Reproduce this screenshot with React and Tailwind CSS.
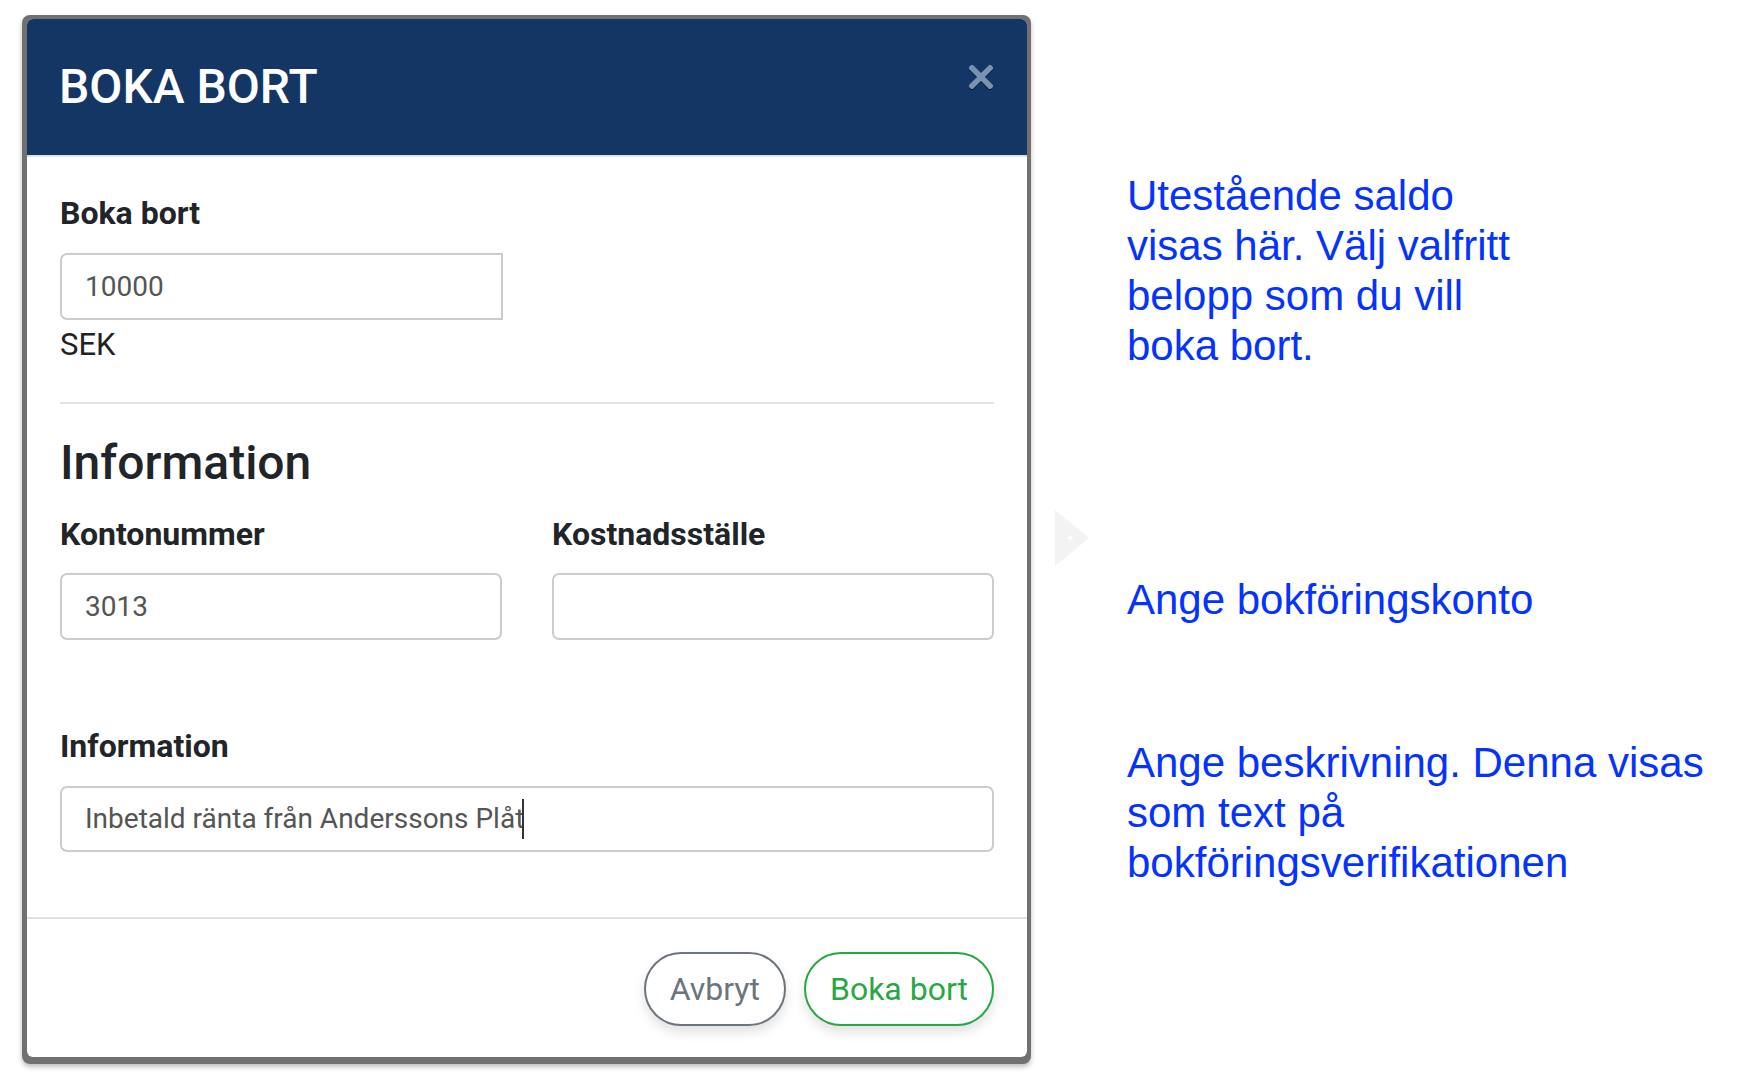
export default function App() {
  return (
    <div className="flex items-start w-[1762px] h-[1080px] bg-white overflow-hidden">
      {/* modal, with the grey screenshot frame around it */}
      <div className="ml-[22px] mt-[15px] w-[1009px] shrink-0 rounded-[8px] bg-[#717171] pl-[5px] pt-[4px] pr-[4px] pb-[7px] shadow-[0_3px_5px_rgba(0,0,0,0.25)]">
        <div className="rounded-[6px] bg-white overflow-hidden font-['Roboto','Liberation_Sans',sans-serif]">
          <div className="flex h-[136px] items-center justify-between bg-[#143664] pl-[32px] pr-[34px]">
            <h1 className="text-[48px] leading-[56px] font-medium text-white">BOKA BORT</h1>
            <button className="-mt-[20px] drop-shadow-[0_1px_0_rgba(0,0,0,0.6)]">
              <svg width="24" height="24" viewBox="0 0 24 24">
                <path d="M3 3 L21 21 M21 3 L3 21" stroke="#7a91b1" strokeWidth="5.5" strokeLinecap="square" />
              </svg>
            </button>
          </div>
          <div className="h-[2px] bg-[#dbe2ea]" />

          <div className="pl-[33px] pr-[33px] pt-[38px] pb-[65px]">
            <div className="text-[32px] leading-[36px] font-bold text-[#212529]">Boka bort</div>
            <div className="mt-[22px] flex h-[67px] w-[443px] items-center rounded-l-[7px] border-2 border-[#cccccc] pl-[23px] text-[28px] text-[#555555]">
              10000
            </div>
            <div className="mt-[7px] text-[31px] leading-[36px] text-[#222222]">SEK</div>

            <div className="mt-[39px] h-[2px] bg-[#e5e5e5]" />

            <h2 className="mt-[31px] text-[48px] leading-[56px] font-medium text-[#212529]">Information</h2>

            <div className="mt-[25px] grid grid-cols-2 gap-x-[50px]">
              <div>
                <div className="text-[32px] leading-[36px] font-bold text-[#212529]">Kontonummer</div>
                <div className="mt-[21px] flex h-[67px] items-center rounded-[7px] border-2 border-[#cccccc] pl-[23px] text-[28px] text-[#555555]">
                  3013
                </div>
              </div>
              <div>
                <div className="text-[32px] leading-[36px] font-bold text-[#212529]">Kostnadsställe</div>
                <div className="mt-[21px] h-[67px] rounded-[7px] border-2 border-[#cccccc]" />
              </div>
            </div>

            <div className="mt-[88px] text-[32px] leading-[36px] font-bold text-[#212529]">Information</div>
            <div className="mt-[22px] flex h-[66px] items-center rounded-[7px] border-2 border-[#cccccc] pl-[23px] text-[28px] text-[#555555]">
              <span>Inbetald ränta från Anderssons Plåt</span>
              <span className="-ml-[2px] inline-block h-[40px] w-[2px] bg-[#333333]" />
            </div>
          </div>

          <div className="flex justify-end gap-[18px] border-t-2 border-[#dee2e6] pt-[33px] pb-[31px] pr-[33px]">
            <button className="h-[74px] rounded-full border-2 border-[#6c757d] bg-white px-[24px] text-[32px] text-[#6c757d] shadow-[0_6px_12px_rgba(0,0,0,0.12)]">
              Avbryt
            </button>
            <button className="h-[74px] rounded-full border-2 border-[#28a745] bg-white px-[24px] text-[32px] text-[#28a745] shadow-[0_6px_12px_rgba(0,0,0,0.12)]">
              Boka bort
            </button>
          </div>
        </div>
      </div>

      {/* faint arrow between modal and notes */}
      <svg className="ml-[24px] mt-[510px] shrink-0" width="34" height="56" viewBox="0 0 34 56">
        <polygon points="0,0 34,28 0,56" fill="#f3f3f3" />
        <path d="M12 28 h6 M15 25 v6" stroke="#ffffff" strokeWidth="1.5" />
      </svg>

      {/* notes */}
      <div className="ml-[38px] pt-[171px] font-['Liberation_Sans',Arial,sans-serif] text-[42px] leading-[50px] text-[#0433ff]">
        <p>
          Utestående saldo
          <br />
          visas här. Välj valfritt
          <br />
          belopp som du vill
          <br />
          boka bort.
        </p>
        <p className="mt-[204px]">Ange bokföringskonto</p>
        <p className="mt-[113px]">
          Ange beskrivning. Denna visas
          <br />
          som text på
          <br />
          bokföringsverifikationen
        </p>
      </div>
    </div>
  );
}
